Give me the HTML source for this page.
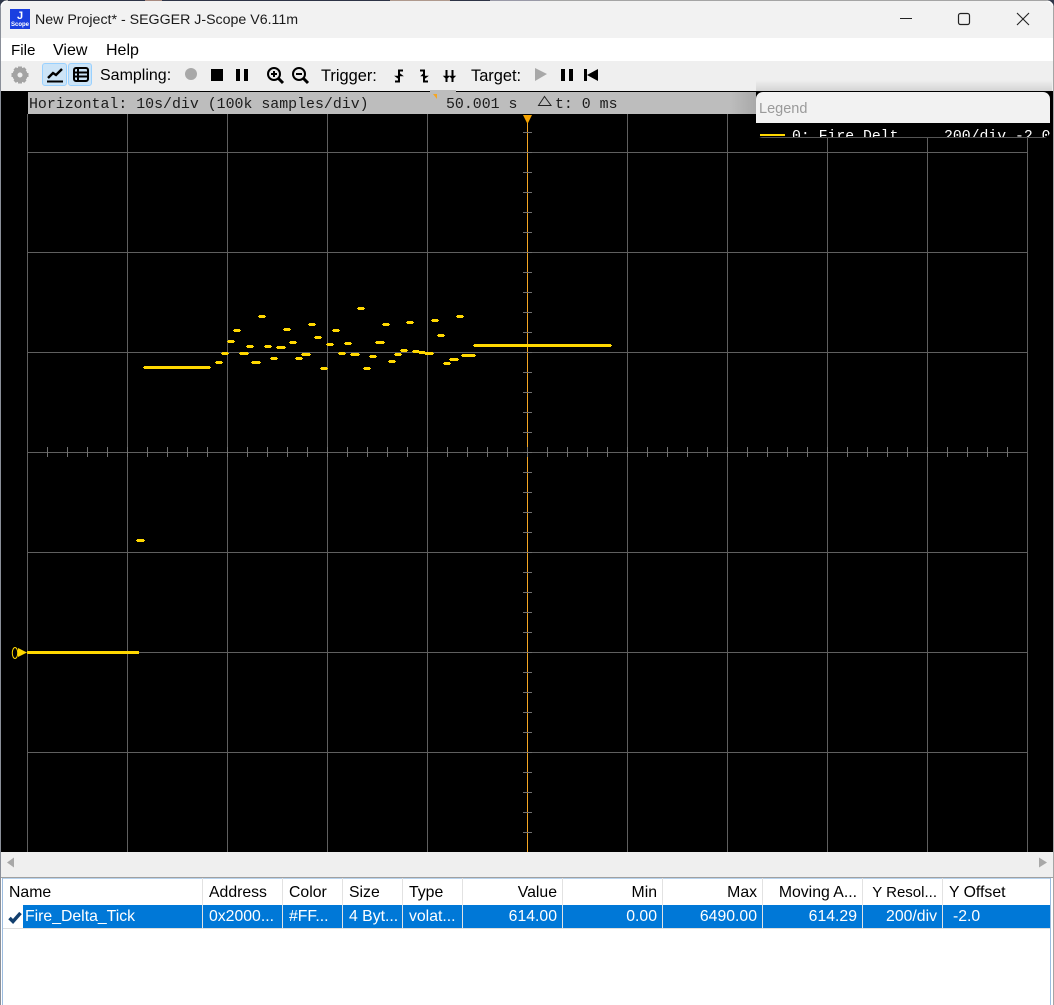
<!DOCTYPE html>
<html lang="en"><head><meta charset="utf-8"><title>New Project* - SEGGER J-Scope V6.11m</title>
<style>
html,body{margin:0;padding:0;width:1054px;height:1005px;overflow:hidden;background:#30384a}
#w{position:absolute;left:0;top:0;width:1054px;height:1005px;background:#fff;border-radius:8px 8px 0 0;overflow:hidden;font-family:"Liberation Sans",sans-serif;color:#000}
.b{position:absolute}
.t{position:absolute;white-space:nowrap;font-size:16px;line-height:20px}
.m{position:absolute;white-space:nowrap;font-family:"Liberation Mono",monospace;font-size:14.9px;line-height:20px;color:#1c1c1c}
.c{position:absolute;top:883px;height:20px;line-height:20px;font-size:15.8px;white-space:nowrap}
.r{position:absolute;top:907px;height:20px;line-height:20px;font-size:15.8px;color:#fff;white-space:nowrap}
.ra{text-align:right}
</style></head><body><div id="w">
<div class="b" style="left:0;top:0;width:1054px;height:1px;background:#a5a5a5"></div>
<div class="b" style="left:8px;top:0;width:532px;height:1px;background:#2e3447"></div>
<div class="b" style="left:145px;top:0;width:17px;height:1px;background:#a88a80"></div>
<div class="b" style="left:390px;top:0;width:60px;height:1px;background:#b09a8e"></div>
<div class="b" style="left:490px;top:0;width:50px;height:1px;background:#9a9aa8"></div>
<div class="b" style="left:0;top:0;width:1px;height:1005px;background:#8a8f99"></div>
<div class="b" style="left:1053px;top:0;width:1px;height:1005px;background:#a5a5a5"></div>
<div class="b" style="left:1px;top:1px;width:1052px;height:37px;background:#f2f2f2;border-radius:8px 8px 0 0"></div>
<div class="b" style="left:1px;top:38px;width:1052px;height:23px;background:#fff"></div>
<div class="b" style="left:1px;top:61px;width:1052px;height:30px;background:#efefef"></div>
<div class="b" style="left:1px;top:91px;width:1052px;height:761px;background:#000"></div>
<div class="b" style="left:28px;top:92px;width:728px;height:22px;background:#bdbdbd"></div>
<div class="b" style="left:430px;top:90px;width:26px;height:2px;background:#bdbdbd"></div>

<div class="b" style="left:10px;top:9px;width:20px;height:20px;background:#1a3fe0"></div>
<div class="b" style="left:10px;top:8px;width:20px;height:14px;color:#fff;font:bold 11px/16px 'Liberation Sans',sans-serif;text-align:center">J</div>
<div class="b" style="left:10px;top:22px;width:20px;height:7px;color:#fff;font:bold 6px/7px 'Liberation Sans',sans-serif;text-align:center">Scope</div>
<div class="t" style="left:35px;top:10px;color:#1a1a1a;font-size:14.2px">New Project* - SEGGER J-Scope V6.11m</div>

<div class="t" style="left:11px;top:41px;font-size:15.2px">File</div>
<div class="t" style="left:53px;top:41px;font-size:16px">View</div>
<div class="t" style="left:106px;top:41px;font-size:16px">Help</div>

<div class="b" style="left:42px;top:63px;width:23px;height:21px;background:#cce4f7;border:1px solid #99d1ff;border-radius:3px"></div>
<div class="b" style="left:68px;top:63px;width:22px;height:21px;background:#cce4f7;border:1px solid #99d1ff;border-radius:3px"></div>
<div class="t" style="left:100px;top:66px">Sampling:</div>
<div class="t" style="left:321px;top:66px;font-size:16.4px">Trigger:</div>
<div class="t" style="left:471px;top:66px;font-size:16.4px">Target:</div>

<svg class="b" style="left:0;top:0" width="1054" height="1005" viewBox="0 0 1054 1005">
<!-- toolbar icons -->
<g fill="#a3a3a3"><circle cx="20" cy="75" r="5" fill="none" stroke="#a3a3a3" stroke-width="5"/><path d="M18 66.500h4v3h-4zM18 80.500h4v3h-4zM11.500 73h3v4h-3zM25.500 73h3v4h-3zM13.500 69.500l2.500-2.500 2.500 3-2.500 2zM26.500 69.500l-2.500-2.500-2.500 3 2.500 2zM13.500 80.500l2.500 2.500 2.500-3-2.500-2zM26.500 80.500l-2.500 2.500-2.500-3 2.500-2z"/></g>
<path d="M47 81.500h16" stroke="#000" stroke-width="2" fill="none"/>
<path d="M48 78l5-5 3 2 6-6" stroke="#000" stroke-width="2.400" fill="none"/>
<rect x="74" y="68" width="14" height="13" rx="2" fill="none" stroke="#000" stroke-width="2"/>
<path d="M74 72.500h14M74 76.500h14M78 68v13" stroke="#000" stroke-width="2" fill="none"/>
<circle cx="191" cy="74" r="6" fill="#a8a8a8"/>
<rect x="211" y="69" width="12" height="12" fill="#000"/>
<path d="M236 69h4v12h-4zM244 69h4v12h-4z" fill="#000"/>
<g fill="none" stroke="#000" stroke-width="2"><circle cx="274" cy="74" r="6"/><path d="M278.500 78.500l4.500 4.500" stroke-width="3"/><path d="M271 74h6M274 71v6"/><circle cx="299" cy="74" r="6"/><path d="M303.500 78.500l4.500 4.500" stroke-width="3"/><path d="M296 74h6"/></g>
<g fill="none" stroke="#000" stroke-width="2"><path d="M403 70.500h-4v11h-4"/><path d="M420 70.500h4v11h4"/><path d="M446.500 70v12M452.500 70v12"/></g>
<path d="M395 76h8l-4-3v6zM421 76h7l-4 3v-6zM444 76h11M446.500 79l-3-3h6zM452.500 79l-3-3h6z" fill="#000" stroke="#000" stroke-width=".6"/>
<path d="M535 68l12 6-12 7z" fill="#a8a8a8"/>
<path d="M561 69h4v12h-4zM569 69h4v12h-4z" fill="#000"/>
<path d="M584 69h3v12h-3zM587 75l11-6v12z" fill="#000"/>
<!-- window controls -->
<path d="M900 18.500h12" stroke="#222" stroke-width="1" fill="none"/>
<rect x="958.500" y="13.500" width="11" height="11" rx="2" fill="none" stroke="#222" stroke-width="1.200"/>
<path d="M1017 13l12 12M1029 13l-12 12" stroke="#222" stroke-width="1.100" fill="none"/>
<!-- bar marks -->
<path d="M433 94h4v5z" fill="#f5a623"/>
<path d="M538.500 105.500l6-9 6.500 9z" fill="none" stroke="#222" stroke-width="1"/>
<!-- grid -->
<g stroke="#5f5f5f" stroke-width="1" fill="none">
<path d="M27.500 114V852M127.500 114V852M227.500 114V852M327.500 114V852M427.500 114V852M627.500 114V852M727.500 114V852M827.500 114V852M927.500 114V852M1027.500 114V852"/>
<path d="M27 152.500H1028M27 252.500H1028M27 352.500H1028M27 452.500H1028M27 552.500H1028M27 652.500H1028M27 752.500H1028"/>
</g>
<path d="M527.500 123V852" stroke="#f5a623" stroke-width="1" fill="none"/>
<path d="M523 115h9l-2 4-2 4h-1l-2-4z" fill="#f5a300"/>
<line x1="47" y1="452" x2="1027" y2="452" stroke="#707070" stroke-width="10" stroke-dasharray="1 19"/>
<line x1="527.500" y1="132" x2="527.500" y2="852" stroke="#707070" stroke-width="9" stroke-dasharray="1 19"/>
<path d="M527.500 447v10" stroke="#707070"/>
<!-- long traces -->
<g fill="none" stroke="#ffd700">
<path stroke-width="3" d="M144 367.500H210M474 345.500H611M462 355.500H475M27 652.500H139M137 540.500h7"/>
<path stroke-width="1" d="M143 367.500h68M473 345.500h139M461 355.500h15M136 540.500h9"/>
<g transform="translate(1 0)">
<path stroke-width="3" d="M215 362.500h6M221 353.500h6M227 341.500h6M233 330.500h6M239 353.500h8M246 346.500h6M251 362.500h8M258 316.500h6M264 346.500h6M270 358.500h6M276 347.500h8M283 329.500h6M289 342.500h6M295 358.500h6M301 354.500h8M308 324.500h6M314 337.500h6M320 368.500h6M326 344.500h6M332 330.500h6M338 353.500h6M344 343.500h6M350 354.500h8M357 308.500h6M363 368.500h6M369 356.500h6M375 342.500h8M382 324.500h6M388 361.500h6M394 354.500h6M400 350.500h6M406 322.500h6M412 351.500h6M418 352.500h6M424 353.500h8M431 320.500h6M437 335.500h6M443 363.500h6M449 359.500h8M456 316.500h6"/>
<path stroke-width="1" d="M214 362.500h8M220 353.500h8M226 341.500h8M232 330.500h8M238 353.500h10M245 346.500h8M250 362.500h10M257 316.500h8M263 346.500h8M269 358.500h8M275 347.500h10M282 329.500h8M288 342.500h8M294 358.500h8M300 354.500h10M307 324.500h8M313 337.500h8M319 368.500h8M325 344.500h8M331 330.500h8M337 353.500h8M343 343.500h8M349 354.500h10M356 308.500h8M362 368.500h8M368 356.500h8M374 342.500h10M381 324.500h8M387 361.500h8M393 354.500h8M399 350.500h8M405 322.500h8M411 351.500h8M417 352.500h8M423 353.500h10M430 320.500h8M436 335.500h8M442 363.500h8M448 359.500h10M455 316.500h8"/>
</g>
</g>
<ellipse cx="15" cy="653" rx="2.700" ry="5.500" fill="none" stroke="#ffd700" stroke-width="1"/>
<path d="M18 648l9 4.500-9 4.500z" fill="#ffd700"/>
</svg>

<div class="m" style="left:29px;top:95px">Horizontal: 10s/div (100k samples/div)</div>
<div class="m" style="left:446px;top:95px">50.001 s</div>
<div class="m" style="left:555px;top:95px">t: 0 ms</div>

<!-- legend -->
<div class="b" style="left:756px;top:92px;width:294px;height:46px;background:#000;border-radius:7px;overflow:hidden;z-index:3">
<div class="b" style="left:0;top:0;width:294px;height:31px;background:#f2f2f2"></div>
<div class="t" style="left:3px;top:7px;font-size:14.500px;color:#9a9a9a">Legend</div>
<div class="b" style="left:4px;top:42px;width:25px;height:2px;background:#ffd700"></div>
<div class="m" style="left:36px;top:35px;color:#fff;font-size:14.800px">0: Fire_Delt</div>
<div class="m" style="left:188px;top:35px;color:#fff;font-size:14.800px">200/div -2.0</div>
<div class="b" style="left:0;top:45px;width:294px;height:1px;background:#555"></div>
</div>
<div class="b" style="left:730px;top:92px;width:26px;height:22px;background:linear-gradient(90deg,rgba(160,160,160,0),rgba(160,160,160,.7))"></div>
<div class="b" style="left:756px;top:80px;width:296px;height:11px;background:linear-gradient(180deg,rgba(200,200,200,0),rgba(190,190,190,.55))"></div>

<!-- scrollbar -->
<div class="b" style="left:1px;top:852px;width:1052px;height:25px;background:#efefef"></div>
<svg class="b" style="left:0;top:852px" width="1054" height="26">
<path d="M7 10.500l7-5v10z" fill="#a8a8a8"/>
<path d="M1039 5.500v10l8-5z" fill="#a8a8a8"/>
</svg>

<!-- table -->
<div class="b" style="left:1px;top:877px;width:1052px;height:1px;background:#a0a0a0"></div>
<div class="b" style="left:2px;top:878px;width:1px;height:127px;background:#9dbde0"></div>
<div class="b" style="left:1050px;top:878px;width:1px;height:127px;background:#9dbde0"></div>
<div class="b" style="left:3px;top:878px;width:1047px;height:1px;background:#b8d3ee"></div>
<div class="b" style="left:23px;top:905px;width:1027px;height:23px;background:#0078d7"></div>
<div class="b" style="left:3px;top:928px;width:1047px;height:1px;background:#dedede"></div>
<svg class="b" style="left:0;top:878px" width="1054" height="52">
<path d="M202.500 0V51M282.500 0V51M342.500 0V51M402.500 0V51M462.500 0V51M562.500 0V51M662.500 0V51M762.500 0V51M862.500 0V51M942.500 0V51" stroke="#e2e2e2" fill="none"/>
<path d="M9.500 40l3.500 3.500L20.500 35" fill="none" stroke="#123f6e" stroke-width="3.500"/>
</svg>

<div class="c" style="left:9px">Name</div>
<div class="c" style="left:209px">Address</div>
<div class="c" style="left:289px">Color</div>
<div class="c" style="left:349px">Size</div>
<div class="c" style="left:409px">Type</div>
<div class="c ra" style="left:463px;width:94px">Value</div>
<div class="c ra" style="left:563px;width:94px">Min</div>
<div class="c ra" style="left:663px;width:94px">Max</div>
<div class="c ra" style="left:763px;width:94px">Moving A...</div>
<div class="c ra" style="left:863px;width:74px;font-size:15px">Y Resol...</div>
<div class="c" style="left:949px">Y Offset</div>

<div class="r" style="left:25px">Fire_Delta_Tick</div>
<div class="r" style="left:209px">0x2000...</div>
<div class="r" style="left:289px">#FF...</div>
<div class="r" style="left:349px">4 Byt...</div>
<div class="r" style="left:409px">volat...</div>
<div class="r ra" style="left:463px;width:94px">614.00</div>
<div class="r ra" style="left:563px;width:94px">0.00</div>
<div class="r ra" style="left:663px;width:94px">6490.00</div>
<div class="r ra" style="left:763px;width:94px">614.29</div>
<div class="r ra" style="left:863px;width:74px">200/div</div>
<div class="r" style="left:953px">-2.0</div>
</div></body></html>
